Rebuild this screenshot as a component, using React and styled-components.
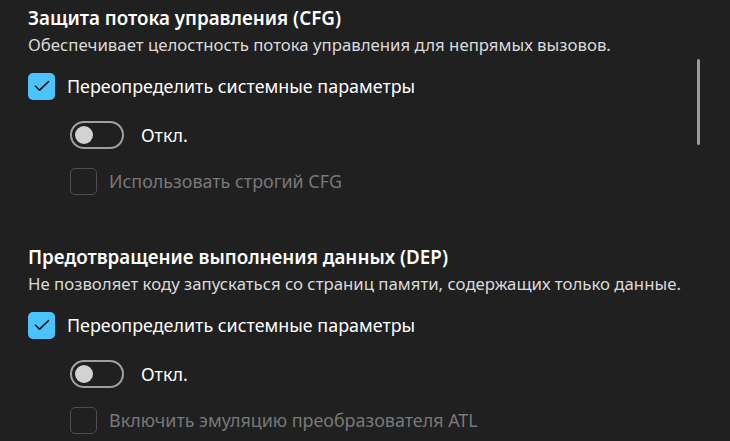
import React from 'react';
import styled, { createGlobalStyle } from 'styled-components';

const GlobalStyle = createGlobalStyle`
  html, body {
    margin: 0;
    padding: 0;
    background: #202020;
  }
  body {
    font-family: "Noto Sans", "Open Sans", sans-serif;
    color: #ffffff;
  }
`;

const Page = styled.div`
  position: relative;
  width: 730px;
  height: 441px;
  overflow: hidden;
  padding: 5px 0 0 28px;
  box-sizing: border-box;
  display: flex;
  flex-direction: column;
  gap: 49px;
`;

const Section = styled.section`
  display: flex;
  flex-direction: column;
`;

const Title = styled.h2`
  margin: 0;
  font-size: 18.8px;
  font-weight: 600;
  line-height: 26px;
  color: #ffffff;
`;

const Description = styled.p`
  margin: 3px 0 0;
  font-size: 16.8px;
  line-height: 22px;
  color: #dadada;
`;

const Row = styled.label`
  display: flex;
  align-items: center;
  height: 28px;
  margin-top: ${p => p.$gap || 0}px;
  margin-left: ${p => p.$indent || 0}px;
  gap: ${p => p.$spacing || 12}px;
  font-size: 17.9px;
  color: ${p => (p.$disabled ? '#787878' : '#ffffff')};
`;

const Box = styled.span`
  width: 27px;
  height: 27px;
  box-sizing: border-box;
  border-radius: 5px;
  display: flex;
  align-items: center;
  justify-content: center;
  background: ${p => (p.$checked ? '#4cc2ff' : 'transparent')};
  border: ${p => (p.$checked ? 'none' : '1.5px solid #4e4e4e')};
`;

const Toggle = styled.span`
  width: 54px;
  height: 28px;
  box-sizing: border-box;
  border: 2px solid #a0a0a0;
  border-radius: 14px;
  display: flex;
  align-items: center;
  padding-left: 3px;
`;

const Knob = styled.span`
  width: 18px;
  height: 18px;
  border-radius: 50%;
  background: #d2d2d2;
`;

const Scrollbar = styled.div`
  position: absolute;
  left: 697px;
  top: 59px;
  width: 3px;
  height: 86px;
  border-radius: 2px;
  background: #9c9c9c;
`;

const Check = () => (
  <svg width="16" height="12" viewBox="0 0 16 12" fill="none">
    <path d="M1.5 6.2 L5.6 10.2 L14.5 1.6" stroke="#141414" strokeWidth="1.6" strokeLinecap="round" strokeLinejoin="round" />
  </svg>
);

const Checkbox = ({ checked, disabled, label, indent, gap }) => (
  <Row $indent={indent} $gap={gap} $disabled={disabled}>
    <Box $checked={checked}>{checked && <Check />}</Box>
    {label}
  </Row>
);

const Switch = ({ label, indent, gap }) => (
  <Row $indent={indent} $gap={gap} $spacing={17}>
    <Toggle><Knob /></Toggle>
    {label}
  </Row>
);

const sections = [
  {
    title: 'Защита потока управления (CFG)',
    desc: 'Обеспечивает целостность потока управления для непрямых вызовов.',
    extra: 'Использовать строгий CFG',
  },
  {
    title: 'Предотвращение выполнения данных (DEP)',
    desc: 'Не позволяет коду запускаться со страниц памяти, содержащих только данные.',
    extra: 'Включить эмуляцию преобразователя ATL',
  },
];

const App = () => (
  <>
    <GlobalStyle />
    <Page>
      {sections.map(s => (
        <Section key={s.title}>
          <Title>{s.title}</Title>
          <Description>{s.desc}</Description>
          <Checkbox checked label="Переопределить системные параметры" gap={16} />
          <Switch label="Откл." indent={42} gap={21} />
          <Checkbox disabled label={s.extra} indent={42} gap={18} />
        </Section>
      ))}
      <Scrollbar />
    </Page>
  </>
);

export default App;
